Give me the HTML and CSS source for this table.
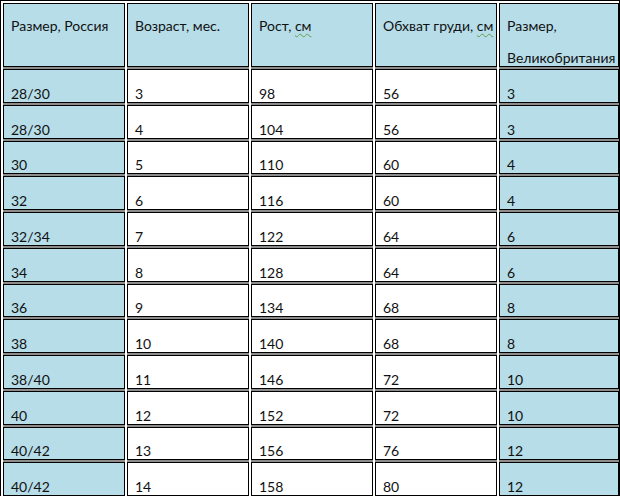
FILE: index.html
```html
<!DOCTYPE html>
<html lang="ru">
<head>
<meta charset="utf-8">
<link rel="stylesheet" href="styles.css">
</head>
<body>
<div class="table">
  <div class="cell head blue">Размер, Россия</div>
  <div class="cell head">Возраст, мес.</div>
  <div class="cell head">Рост, <span class="sq">см</span></div>
  <div class="cell head">Обхват груди, <span class="sq">см</span></div>
  <div class="cell head blue">Размер,<br>Великобритания</div>

  <div class="cell blue">28/30</div><div class="cell">3</div><div class="cell">98</div><div class="cell">56</div><div class="cell blue">3</div>
  <div class="cell blue">28/30</div><div class="cell">4</div><div class="cell">104</div><div class="cell">56</div><div class="cell blue">3</div>
  <div class="cell blue">30</div><div class="cell">5</div><div class="cell">110</div><div class="cell">60</div><div class="cell blue">4</div>
  <div class="cell blue">32</div><div class="cell">6</div><div class="cell">116</div><div class="cell">60</div><div class="cell blue">4</div>
  <div class="cell blue">32/34</div><div class="cell">7</div><div class="cell">122</div><div class="cell">64</div><div class="cell blue">6</div>
  <div class="cell blue">34</div><div class="cell">8</div><div class="cell">128</div><div class="cell">64</div><div class="cell blue">6</div>
  <div class="cell blue">36</div><div class="cell">9</div><div class="cell">134</div><div class="cell">68</div><div class="cell blue">8</div>
  <div class="cell blue">38</div><div class="cell">10</div><div class="cell">140</div><div class="cell">68</div><div class="cell blue">8</div>
  <div class="cell blue">38/40</div><div class="cell">11</div><div class="cell">146</div><div class="cell">72</div><div class="cell blue">10</div>
  <div class="cell blue">40</div><div class="cell">12</div><div class="cell">152</div><div class="cell">72</div><div class="cell blue">10</div>
  <div class="cell blue">40/42</div><div class="cell">13</div><div class="cell">156</div><div class="cell">76</div><div class="cell blue">12</div>
  <div class="cell blue">40/42</div><div class="cell">14</div><div class="cell">158</div><div class="cell">80</div><div class="cell blue">12</div>
</div>
</body>
</html>
```

FILE: styles.css
```css
html, body {
  margin: 0;
  padding: 0;
  background: #fff;
}
.table {
  width: 620px;
  box-sizing: border-box;
  border: 1px solid #000;
  border-bottom: 0;
  padding: 2px 2px 0;
  display: grid;
  grid-template-columns: 122px 122px 122px 122px 1fr;
  grid-template-rows: 64px;
  grid-auto-rows: 33.75px;
  column-gap: 2px;
  row-gap: 2px;
  font-family: Lato, "Open Sans", sans-serif;
  font-size: 14px;
  color: #111;
}
.cell {
  box-sizing: border-box;
  border: 1px solid #000;
  background: #fff;
  padding: 0 3px 0 7px;
  line-height: 16px;
  display: flex;
  align-items: flex-end;
  box-shadow: 0 2px 0 #8c8c8c;
  white-space: nowrap;
}
.blue {
  background: #b6dde8;
}
.head {
  background: #b6dde8;
  display: block;
  line-height: 32px;
  padding-top: 6px;
}
.sq {
  text-decoration: underline wavy #5f9f4f;
  text-decoration-thickness: 1px;
  text-underline-offset: 2px;
}
```
